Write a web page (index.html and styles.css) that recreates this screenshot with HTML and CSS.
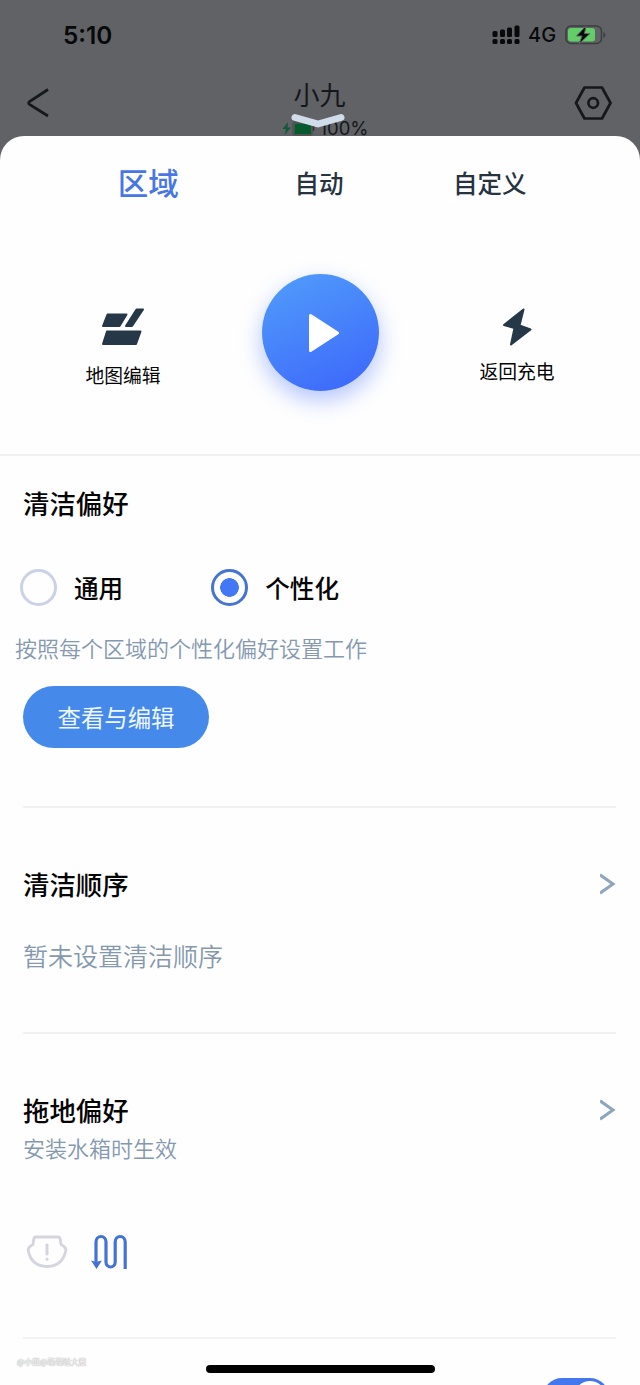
FILE: index.html
```
<!DOCTYPE html>
<html lang="zh-CN">

<head>
    <meta charset="UTF-8">
    <meta name="viewport" content="width=device-width, initial-scale=1.0">
    <title>小九</title>
    <link rel="stylesheet" href="styles.css">
</head>

<body>
    <div class="phone">
        <header class="header">
            <div class="status">
                <span class="status__time">5:10</span>
                <div class="status__right">
                    <svg class="status__signal" width="28" height="20" viewBox="0 0 28 20">
                        <rect x="0.5" y="6" width="5" height="6" rx="1.5" />
                        <rect x="8" y="4.500" width="5" height="7.500" rx="1.5" />
                        <rect x="15" y="2.500" width="5" height="9.500" rx="1.5" />
                        <rect x="22.500" y="0.500" width="5" height="11.500" rx="1.5" />
                        <rect x="0.5" y="14" width="5" height="5" rx="1.5" />
                        <rect x="8" y="14" width="5" height="5" rx="1.5" />
                        <rect x="15" y="14" width="5" height="5" rx="1.5" />
                        <rect x="22.500" y="14" width="5" height="5" rx="1.5" />
                    </svg>
                    <span class="status__network">4G</span>
                    <svg width="42" height="22" viewBox="0 0 42 22">
                        <rect x="1" y="2" width="35.500" height="17.500" rx="5" fill="none" stroke="#3b3d40" stroke-width="1.5" />
                        <rect x="3" y="4" width="27" height="13.500" rx="3" fill="#62ce67" />
                        <path d="M38.500 8v6c2.500-1 2.500-5 0-6z" fill="#3b3d40" />
                        <path d="M21 2L11.500 12h5.500l-3 8L25 9.500h-5.500z" fill="#08090b" stroke="#606265" stroke-width="1" />
                    </svg>
                </div>
            </div>
            <nav class="nav">
                <svg width="22" height="30" viewBox="0 0 22 30" fill="none" stroke="#14171b" stroke-width="2.700">
                    <path d="M21 1.500L2.500 13.500q-1.800 1.500 0 3L21 28" />
                </svg>
                <div class="nav__device">
                    <h1 class="nav__title">小九</h1>
                    <div class="nav__battery">
                        <svg width="33" height="15" viewBox="0 0 33 15">
                            <path d="M6 1L0.500 8H4l-1.500 6L9 6.500H5.500z" fill="#12583a" />
                            <rect x="11" y="1" width="19" height="13" rx="1" fill="none" stroke="#43464a" />
                            <rect x="12.500" y="2.500" width="16.500" height="10.500" fill="#075a2d" />
                            <path d="M31.500 5v5" stroke="#303338" stroke-width="1.500" />
                        </svg>
                        <span>100%</span>
                    </div>
                    <svg class="nav__handle" width="54" height="16" viewBox="0 0 54 16" fill="none" stroke="#d1dceb" stroke-width="7" stroke-linecap="round" stroke-linejoin="round">
                        <path d="M4 4.500L27 11L50 4.500" />
                    </svg>
                </div>
                <svg width="38" height="34" viewBox="0 0 38 34" fill="none" stroke="#14171b" stroke-width="2.700" stroke-linejoin="round">
                    <path d="M10.500 1.500h17.500L36.500 17l-8.500 15.500H10.500L2 17z" />
                    <circle cx="19.200" cy="17" r="4.800" />
                </svg>
            </nav>
        </header>

        <main class="sheet">
            <div class="tabs">
                <span class="tabs__item tabs__item--active">区域</span>
                <span class="tabs__item">自动</span>
                <span class="tabs__item">自定义</span>
            </div>

            <div class="controls">
                <div class="control control--map">
                    <svg width="44" height="38" viewBox="0 0 44 38" fill="#263847" stroke="#263847" stroke-width="2" stroke-linejoin="round">
                        <path d="M6.500 6.500H25.500L18.500 18H2z" />
                        <path d="M35.500 1.500h6.500L31 18h-6z" />
                        <path d="M6 23.500h33.500L35 36H2z" />
                    </svg>
                    <span>地图编辑</span>
                </div>
                <button class="play">
                    <svg width="32" height="40" viewBox="0 0 32 40" fill="#fff" stroke="#fff" stroke-width="3" stroke-linejoin="round">
                        <path d="M2.500 2.500v35L29.500 20z" />
                    </svg>
                </button>
                <div class="control control--charge">
                    <svg width="30" height="38" viewBox="0 0 30 38" fill="#263847" stroke="#263847" stroke-width="2" stroke-linejoin="round">
                        <path d="M21.500 1.500L2 17l10.500 3L9 36.500 28.500 21.500 17.500 17.500z" />
                    </svg>
                    <span>返回充电</span>
                </div>
            </div>

            <section class="section section--clean">
                <h2 class="section__title">清洁偏好</h2>
                <div class="radios">
                    <label class="radio"><i class="radio__mark"></i>通用</label>
                    <label class="radio"><i class="radio__mark radio__mark--checked"></i>个性化</label>
                </div>
                <p class="section__hint">按照每个区域的个性化偏好设置工作</p>
                <button class="edit-button">查看与编辑</button>
            </section>

            <section class="section section--order">
                <div class="section__head">
                    <h2 class="section__title">清洁顺序</h2>
                    <svg width="16" height="22" viewBox="0 0 16 22" fill="none" stroke="#8ea5bd" stroke-width="3">
                        <path d="M0 1.800L13 11L0 20.200" />
                    </svg>
                </div>
                <p class="section__value">暂未设置清洁顺序</p>
            </section>

            <section class="section section--mop">
                <div class="section__head">
                    <h2 class="section__title">拖地偏好</h2>
                    <svg width="16" height="22" viewBox="0 0 16 22" fill="none" stroke="#8ea5bd" stroke-width="3">
                        <path d="M0 1.800L13 11L0 20.200" />
                    </svg>
                </div>
                <p class="section__note">安装水箱时生效</p>
                <div class="modes">
                    <svg width="42" height="34" viewBox="0 0 42 34" fill="none" stroke="#d4d5de" stroke-width="2.800" stroke-linejoin="round" stroke-linecap="round">
                        <path d="M10 2h22q2 0 2.400 3l.6 4.500q3.500 1.500 5 5Q37 31.500 21 31.500T2 14.500Q3.500 11 7 9.500L7.600 5Q8 2 10 2z" />
                        <path d="M21 10v9" stroke-width="3" />
                        <path d="M21 24v.3" stroke-width="3" />
                    </svg>
                    <svg width="36" height="36" viewBox="0 0 36 36" fill="none" stroke="#4473d6" stroke-width="3.200">
                        <path d="M5 31V8a5 5.500 0 0 1 10 0v20a4.600 5 0 0 0 9.200 0V8a5 5.500 0 0 1 10 0v27" />
                        <path d="M0 26.500q3 .5 5 2 2-1.500 6-2L5.500 35z" fill="#4473d6" stroke="none" />
                    </svg>
                </div>
            </section>

            <footer class="bottom">
                <span class="bottom__mark">@小熊@萌萌哒大屋</span>
                <i class="bottom__home"></i>
                <div class="switch"><i class="switch__knob"></i></div>
            </footer>
        </main>
    </div>
</body>

</html>
```
FILE: styles.css
```
*,
*::before,
*::after {
    box-sizing: border-box;
    margin: 0;
    padding: 0;
}

body {
    background-color: #606265;
    font-family: "Noto Sans CJK SC", sans-serif;
    color: #050506;
}

svg {
    display: block;
    flex-shrink: 0;
}

button {
    border: none;
    font-family: inherit;
}

.phone {
    width: 640px;
    height: 1385px;
    overflow: hidden;
}

.header {
    height: 136px;
}

.status {
    display: flex;
    justify-content: space-between;
    align-items: center;
    height: 70px;
    padding: 0 33px 0 63px;
    font-family: Inter, sans-serif;
    color: #08090b;
}

.status__time {
    font-size: 24.3px;
    font-weight: 600;
}

.status__right {
    display: flex;
    align-items: center;
}

.status__signal {
    margin-right: 8px;
    fill: #08090b;
}

.status__network {
    width: 37px;
    font-size: 20px;
    font-weight: 500;
}

.nav {
    display: flex;
    justify-content: space-between;
    align-items: center;
    height: 66px;
    padding: 0 28px 0 27px;
    color: #14171b;
}

.nav__device {
    position: relative;
    height: 66px;
    margin-left: 28px;
}

.nav__title {
    height: 50px;
    padding-right: 12px;
    text-align: center;
    font-size: 26px;
    font-weight: 400;
    line-height: 48px;
}

.nav__battery {
    display: flex;
    align-items: center;
    gap: 4px;
    height: 16px;
    font-family: Inter, sans-serif;
    font-size: 18.5px;
}

/* pull-down handle sits over the device name */
.nav__handle {
    position: absolute;
    top: 43px;
    left: 9px;
}

.sheet {
    height: 1249px;
    overflow: hidden;
    border-radius: 24px 24px 0 0;
    background-color: #fefefe;
}

.tabs {
    display: grid;
    grid-template-columns: repeat(3, 1fr);
    align-items: center;
    height: 94px;
    padding: 0 65px 2px 63px;
    text-align: center;
}

.tabs__item {
    font-size: 24.5px;
    font-weight: 500;
    color: #263340;
}

.tabs__item--active {
    font-size: 30.5px;
    color: #4777e5;
}

.controls {
    display: grid;
    grid-template-columns: repeat(3, 197px);
    justify-content: center;
    justify-items: center;
    height: 226px;
    padding-top: 44px;
    border-bottom: 2px solid #f1f1f2;
}

.control {
    display: flex;
    flex-direction: column;
    align-items: center;
    font-size: 18.8px;
    line-height: 28px;
}

.control--map {
    gap: 15px;
    padding-top: 34px;
}

.control--charge {
    gap: 11px;
    padding-top: 34px;
}

.play {
    display: flex;
    justify-content: center;
    align-items: center;
    width: 117px;
    height: 117px;
    padding-left: 7px;
    border-radius: 50%;
    background: linear-gradient(155deg, #4f98fb 10%, #3e6bfa 90%);
    box-shadow: 0 9px 22px rgba(65, 110, 250, 0.4);
}

.section {
    margin: 0 24px 0 23px;
    border-bottom: 2px solid #f1f1f2;
}

.section--clean {
    height: 352px;
    padding-top: 27px;
}

.section--order {
    height: 226px;
    padding-top: 56px;
}

.section--mop {
    height: 305px;
    padding-top: 56px;
}

.section__head {
    display: flex;
    justify-content: space-between;
    align-items: center;
}

.section__title {
    font-size: 26.4px;
    font-weight: 500;
    line-height: 40px;
}

.radios {
    display: flex;
    gap: 88px;
    margin: 45px 0 0 -3px;
}

.radio {
    display: flex;
    align-items: center;
    gap: 17px;
    font-size: 24.6px;
    font-weight: 500;
    line-height: 38px;
}

.radio__mark {
    width: 37px;
    height: 37px;
    border: 3px solid #cbd1e6;
    border-radius: 50%;
}

.radio__mark--checked {
    border-color: #4674d1;
    background: radial-gradient(circle, #4278f5 9px, transparent 9.6px);
}

.section__hint {
    margin: 25px 0 0 -8px;
    font-size: 22px;
    font-weight: 350;
    line-height: 32px;
    color: #8598b0;
}

.edit-button {
    width: 186px;
    height: 62px;
    margin: 23px 0 0;
    border-radius: 31px;
    background-color: #458aeb;
    color: #eff8ff;
    font-size: 23.4px;
    font-weight: 400;
}

.section__value {
    margin-top: 32px;
    font-size: 25px;
    font-weight: 350;
    line-height: 38px;
    color: #8598b0;
}

.section__note {
    margin-top: 1px;
    font-size: 22px;
    font-weight: 350;
    line-height: 32px;
    color: #8598b0;
}

.modes {
    display: flex;
    align-items: center;
    gap: 23px;
    margin: 71px 0 0 3px;
}

.bottom {
    display: grid;
    grid-template-columns: 189px 229px 1fr;
    height: 46px;
    padding-left: 17px;
}

.bottom__mark {
    padding-top: 17px;
    font-size: 7.8px;
    line-height: 12px;
    color: #fff;
    text-shadow: 0 0 1px #999, 0 0 1px #aaa;
}

.bottom__home {
    height: 8px;
    margin-top: 26px;
    border-radius: 4px;
    background-color: #000;
}

.switch {
    justify-self: end;
    display: flex;
    justify-content: flex-end;
    width: 66px;
    height: 38px;
    margin: 39px 31px 0 0;
    padding: 3px;
    border-radius: 19px;
    background-color: #4377ee;
}

.switch__knob {
    width: 32px;
    height: 32px;
    border-radius: 50%;
    background-color: #fff;
}
```
